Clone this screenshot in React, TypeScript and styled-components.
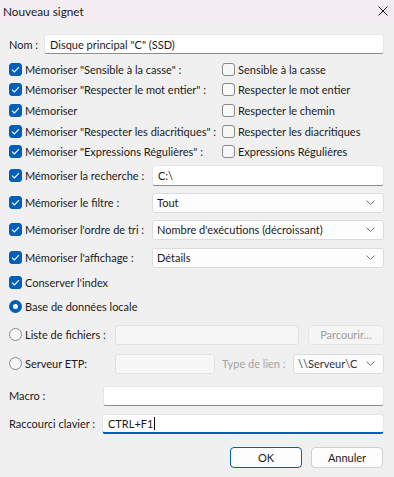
import React from "react";
import styled, { createGlobalStyle } from "styled-components";

const GlobalStyle = createGlobalStyle`
  html, body { margin: 0; padding: 0; background: #f0f0f0; }
  body { font-family: Lato, "Noto Sans", sans-serif; font-size: 11px; color: #1b1b1b; }
  * { box-sizing: border-box; }
`;

const Window = styled.div`
  width: 394px;
  height: 477px;
  background: #f0f0f0;
  display: flex;
  flex-direction: column;
  overflow: hidden;
`;

const TitleBar = styled.div`
  height: 22px;
  background: #f4edf3;
  display: flex;
  align-items: center;
  justify-content: space-between;
  padding: 0 6px 0 3px;
  font-size: 11.8px;
  color: #1a1a1a;
`;

const Body = styled.div`
  display: flex;
  flex-direction: column;
  padding: 0 10px 0 9px;
`;

const Row = styled.div<{ $top: number; $h?: number; $end?: boolean }>`
  display: flex;
  align-items: center;
  height: ${(p) => p.$h ?? 20}px;
  margin-top: ${(p) => p.$top}px;
  justify-content: ${(p) => (p.$end ? "flex-end" : "flex-start")};
`;

const GridRow = styled.div<{ $top: number; $h?: number; $cols: string }>`
  display: grid;
  grid-template-columns: ${(p) => p.$cols};
  align-items: center;
  height: ${(p) => p.$h ?? 20}px;
  margin-top: ${(p) => p.$top}px;
`;

const Label = styled.span<{ $muted?: boolean }>`
  white-space: nowrap;
  color: ${(p) => (p.$muted ? "#a3a3a3" : "#1b1b1b")};
`;

const OptionGrid = styled.div`
  display: grid;
  grid-template-columns: 213px 1fr;
  grid-auto-rows: 20.6px;
  margin-top: 5px;
`;

const Check = styled.div`
  display: flex;
  align-items: center;
  white-space: nowrap;
  min-width: 0;
`;

const Box = styled.span<{ $on: boolean }>`
  flex: 0 0 13px;
  width: 13px;
  height: 13px;
  border-radius: 3px;
  margin-right: 3px;
  display: flex;
  align-items: center;
  justify-content: center;
  background: ${(p) => (p.$on ? "#005fb8" : "#f7f7f7")};
  border: 1px solid ${(p) => (p.$on ? "#005fb8" : "#8a8a8a")};
`;

const RadioDot = styled.span<{ $on: boolean }>`
  flex: 0 0 13px;
  width: 13px;
  height: 13px;
  border-radius: 50%;
  margin-right: 3px;
  background: ${(p) => (p.$on ? "#fff" : "#f7f7f7")};
  border: ${(p) => (p.$on ? "4px solid #005fb8" : "1px solid #8a8a8a")};
`;

const Field = styled.div<{ $focus?: boolean; $disabled?: boolean }>`
  min-width: 0;
  height: 100%;
  display: flex;
  align-items: center;
  padding-left: 5px;
  border-radius: 3px;
  background: ${(p) => (p.$disabled ? "#f6f6f6" : "#ffffff")};
  border: 1px solid ${(p) => (p.$disabled ? "#e2e2e2" : "#e6e6e6")};
  border-bottom: ${(p) =>
    p.$disabled
      ? "1px solid #e2e2e2"
      : p.$focus
      ? "2px solid #005fb8"
      : "1px solid #8c8c8c"};
  white-space: nowrap;
  overflow: hidden;
`;

const Select = styled.div<{ $disabled?: boolean }>`
  min-width: 0;
  height: 100%;
  display: flex;
  align-items: center;
  justify-content: space-between;
  padding: 0 8px 0 4px;
  border-radius: 3px;
  background: #fdfdfd;
  border: 1px solid #dcdcdc;
  color: ${(p) => (p.$disabled ? "#333344" : "#1b1b1b")};
  white-space: nowrap;
  overflow: hidden;
`;

const Caret = styled.span`
  display: inline-block;
  width: 1px;
  height: 13px;
  background: #000;
  margin-left: 1px;
`;

const Button = styled.div<{ $w?: number; $primary?: boolean; $disabled?: boolean; $ml?: number }>`
  flex: 0 0 ${(p) => (p.$w ? `${p.$w}px` : "auto")};
  height: 100%;
  margin-left: ${(p) => p.$ml ?? 0}px;
  display: flex;
  align-items: center;
  justify-content: center;
  border-radius: 4px;
  background: ${(p) => (p.$disabled ? "#f5f5f5" : "#fdfdfd")};
  border: 1px solid
    ${(p) => (p.$primary ? "#005fb8" : p.$disabled ? "#e5e5e5" : "#d0d0d0")};
  color: ${(p) => (p.$disabled ? "#9d9d9d" : "#1b1b1b")};
`;

const ButtonBar = styled(Row)`
  padding-right: 1px;
`;

const Tick = () => (
  <svg width="9" height="7" viewBox="0 0 9 7">
    <path d="M1 3.6 L3.4 6 L8 1.2" fill="none" stroke="#fff" strokeWidth="1.1" />
  </svg>
);

const Chevron = () => (
  <svg width="9" height="5" viewBox="0 0 9 5">
    <path d="M0.5 0.5 L4.5 4.5 L8.5 0.5" fill="none" stroke="#707070" strokeWidth="1" />
  </svg>
);

const CloseIcon = () => (
  <svg width="10" height="10" viewBox="0 0 10 10">
    <path d="M0.5 0.5 L9.5 9.5 M9.5 0.5 L0.5 9.5" stroke="#1a1a1a" strokeWidth="1" />
  </svg>
);

const CheckItem = ({ on, label }: { on: boolean; label: string }) => (
  <Check>
    <Box $on={on}>{on && <Tick />}</Box>
    <Label>{label}</Label>
  </Check>
);

const RadioItem = ({ on, label }: { on: boolean; label: string }) => (
  <Check>
    <RadioDot $on={on} />
    <Label>{label}</Label>
  </Check>
);

const options: [string, string][] = [
  ['Mémoriser "Sensible à la casse" :', "Sensible à la casse"],
  ['Mémoriser "Respecter le mot entier" :', "Respecter le mot entier"],
  ["Mémoriser", "Respecter le chemin"],
  ['Mémoriser "Respecter les diacritiques" :', "Respecter les diacritiques"],
  ['Mémoriser "Expressions Régulières" :', "Expressions Régulières"],
];

const selects: [string, string, number][] = [
  ["Mémoriser le filtre :", "Tout", 7],
  ["Mémoriser l'ordre de tri :", "Nombre d'exécutions (décroissant)", 7],
  ["Mémoriser l'affichage :", "Détails", 8],
];

export default function App() {
  return (
    <Window>
      <GlobalStyle />
      <TitleBar>
        <span>Nouveau signet</span>
        <CloseIcon />
      </TitleBar>
      <Body>
        <GridRow $top={12} $cols="35px 1fr">
          <Label>Nom :</Label>
          <Field>Disque principal "C" (SSD)</Field>
        </GridRow>

        <OptionGrid>
          {options.map(([l, r]) => (
            <React.Fragment key={r}>
              <CheckItem on label={l} />
              <CheckItem on={false} label={r} />
            </React.Fragment>
          ))}
        </OptionGrid>

        <GridRow $top={3} $h={21} $cols="143px 1fr">
          <CheckItem on label="Mémoriser la recherche :" />
          <Field>C:\</Field>
        </GridRow>

        {selects.map(([l, v, top]) => (
          <GridRow $top={top} $cols="143px 1fr" key={l}>
            <CheckItem on label={l} />
            <Select>
              <span>{v}</span>
              <Chevron />
            </Select>
          </GridRow>
        ))}

        <Row $top={5}>
          <CheckItem on label="Conserver l'index" />
        </Row>

        <Row $top={4}>
          <RadioItem on label="Base de données locale" />
        </Row>

        <GridRow $top={8} $cols="106px 184px 9px 1fr">
          <RadioItem on={false} label="Liste de fichiers :" />
          <Field $disabled />
          <span />
          <Button $disabled>Parcourir…</Button>
        </GridRow>

        <GridRow $top={9} $cols="106px 100px 7px 71px 1fr">
          <RadioItem on={false} label="Serveur ETP:" />
          <Field $disabled />
          <span />
          <Label $muted>Type de lien :</Label>
          <Select $disabled>
            <span>\\Serveur\C</span>
            <Chevron />
          </Select>
        </GridRow>

        <GridRow $top={12} $cols="94px 1fr">
          <Label>Macro :</Label>
          <Field />
        </GridRow>

        <GridRow $top={8} $cols="93px 1fr">
          <Label>Raccourci clavier :</Label>
          <Field $focus>
            CTRL+F1
            <Caret />
          </Field>
        </GridRow>

        <ButtonBar $top={13} $h={21} $end>
          <Button $w={72} $primary>
            OK
          </Button>
          <Button $w={72} $ml={9}>
            Annuler
          </Button>
        </ButtonBar>
      </Body>
    </Window>
  );
}
